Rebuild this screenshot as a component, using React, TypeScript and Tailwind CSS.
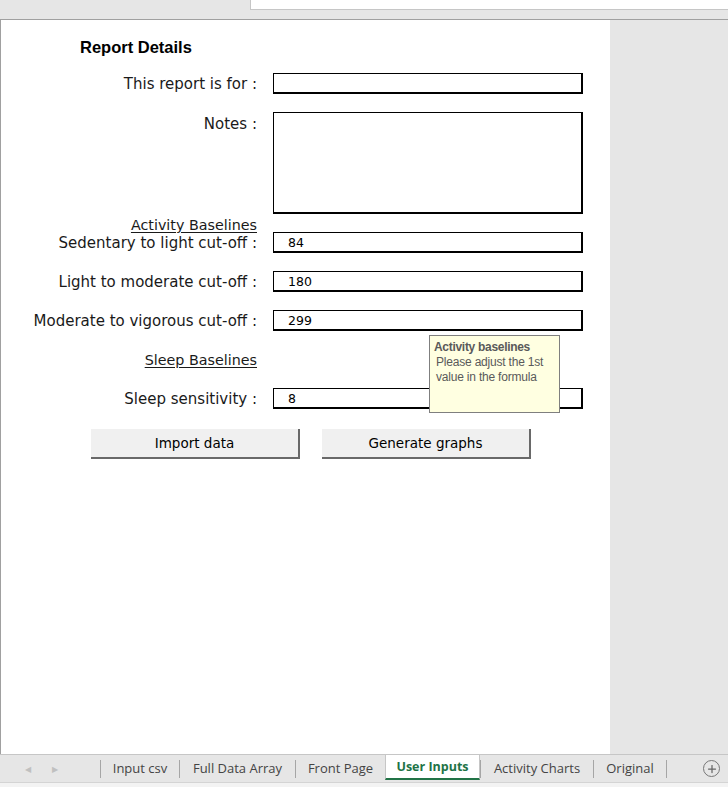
import { Plus } from "lucide-react";

const label = "text-[15px] leading-[18px] text-[#1a1a1a] [font-family:'DejaVu_Sans',Verdana,sans-serif]";

function Field({ value = "", tall = false }: { value?: string; tall?: boolean }) {
  return (
    <div
      className={[
        "w-[310px] border-t border-l border-b-2 border-r-2 border-black bg-white pl-[14px] text-[12.5px] text-black [font-family:'DejaVu_Sans',Verdana,sans-serif]",
        tall ? "h-[102px]" : "flex h-[21px] items-center pt-[2px]",
      ].join(" ")}
    >
      {value}
    </div>
  );
}

function Row({ text, value, mt }: { text: string; value: string; mt: string }) {
  return (
    <div className={`flex items-center ${mt}`}>
      <div className={`w-[257px] pr-[1px] text-right ${label}`}>{text}</div>
      <div className="ml-[15px]">
        <Field value={value} />
      </div>
    </div>
  );
}

function Heading({ text, mt }: { text: string; mt: string }) {
  return (
    <div className={`flex h-[16px] ${mt}`}>
      <div className="w-[257px] pr-[1px] text-right text-[14.3px] leading-[18px] text-[#1a1a1a] underline underline-offset-2 [font-family:'DejaVu_Sans',Verdana,sans-serif]">
        {text}
      </div>
    </div>
  );
}

function Btn({ text }: { text: string }) {
  return (
    <div className="flex h-[30px] w-[209px] items-center justify-center border-b-2 border-r-2 border-[#696969] bg-[#f0f0f0] text-[13.5px] text-black [font-family:'DejaVu_Sans',Verdana,sans-serif]">
      {text}
    </div>
  );
}

const tabs = [
  { name: "Input csv", w: "w-[79px]" },
  { name: "Full Data Array", w: "w-[116px]" },
  { name: "Front Page", w: "w-[90px]" },
  { name: "User Inputs", w: "w-[95px]", active: true },
  { name: "Activity Charts", w: "w-[113px]" },
  { name: "Original", w: "w-[73px]" },
];

export default function App() {
  return (
    <div className="flex h-[787px] w-[728px] flex-col overflow-hidden bg-[#e6e6e6]">
      {/* formula strip */}
      <div className="flex h-[20px] shrink-0 border-b border-[#a0a0a0]">
        <div className="w-[250px]" />
        <div className="h-[10px] flex-1 border-b border-l border-[#c6c6c6] bg-white" />
      </div>

      {/* sheet */}
      <div className="flex min-h-0 flex-1">
        <div className="relative w-[610px] border-l border-[#a0a0a0] bg-white">
          <div className="flex flex-col">
            <div className="ml-[79px] mt-[17px] h-[20px] text-[16.5px] font-bold leading-[20px] text-black [font-family:'Liberation_Sans',Arial,sans-serif]">
              Report Details
            </div>

            <Row text="This report is for :" value="" mt="mt-[16px]" />

            <div className="mt-[18px] flex">
              <div className={`w-[257px] pr-[1px] pt-[3px] text-right ${label}`}>Notes :</div>
              <div className="ml-[15px]">
                <Field tall />
              </div>
            </div>

            <Heading text="Activity Baselines" mt="mt-[2px]" />
            <Row text="Sedentary to light cut-off :" value="84" mt="mt-0" />
            <Row text="Light to moderate cut-off :" value="180" mt="mt-[18px]" />
            <Row text="Moderate to vigorous cut-off :" value="299" mt="mt-[18px]" />

            <Heading text="Sleep Baselines" mt="mt-[20px]" />
            <Row text="Sleep sensitivity :" value="8" mt="mt-[21px]" />

            <div className="ml-[90px] mt-[20px] flex gap-[22px]">
              <Btn text="Import data" />
              <Btn text="Generate graphs" />
            </div>
          </div>

          {/* comment tooltip */}
          <div className="absolute left-[428px] top-[315px] h-[78px] w-[131px] border border-[#7f7f7f] bg-[#ffffe1] px-[4px] pt-[4px] text-[12px] leading-[15px] text-[#5a5a5a] [font-family:'Liberation_Sans',Arial,sans-serif]">
            <div className="font-bold tracking-[-0.3px]">Activity baselines</div>
            <div className="pl-[2px] tracking-[-0.2px]">Please adjust the 1st</div>
            <div className="pl-[2px] tracking-[-0.2px]">value in the formula</div>
          </div>
        </div>
        <div className="flex-1" />
      </div>

      {/* sheet tabs */}
      <div className="flex h-[28px] shrink-0 border-t border-[#c6c6c6] text-[13px] text-[#444] [font-family:'Open_Sans',sans-serif]">
        <div className="flex w-[100px] items-center">
          <span className="ml-[25px] text-[8px] text-[#c0c0c0]">◀</span>
          <span className="ml-[21px] text-[8px] text-[#c0c0c0]">▶</span>
        </div>
        {tabs.map((t) =>
          t.active ? (
            <div
              key={t.name}
              className={`${t.w} -mt-px flex h-[26px] items-center justify-center border-x border-t border-[#c6c6c6] border-b-2 border-b-[#217346] bg-white pt-[2px] text-[12.5px] font-bold text-[#217346]`}
            >
              {t.name}
            </div>
          ) : (
            <div key={t.name} className={`${t.w} flex items-center justify-center`}>
              <span className="h-[18px] w-px self-center bg-[#a6a6a6]" />
              <span className="flex-1 text-center">{t.name}</span>
            </div>
          )
        )}
        <div className="flex items-center">
          <span className="h-[18px] w-px bg-[#a6a6a6]" />
        </div>
        <div className="flex flex-1 items-center justify-end pr-[8px]">
          <span className="flex h-[17px] w-[17px] items-center justify-center rounded-full border border-[#777]">
            <Plus size={12} strokeWidth={2.5} color="#666" />
          </span>
        </div>
      </div>
      <div className="h-[5px] shrink-0 border-t border-[#d4d4d4] bg-[#f3f3f3]" />
    </div>
  );
}
